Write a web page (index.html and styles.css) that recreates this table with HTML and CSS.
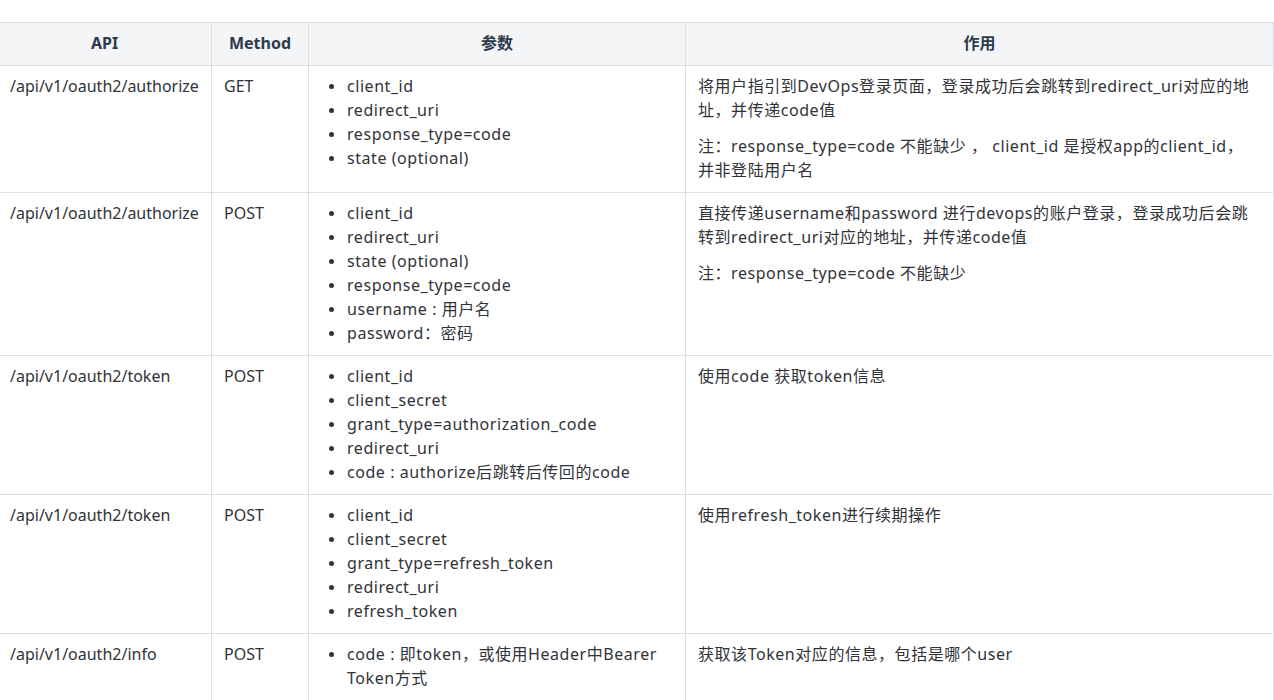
FILE: index.html
```html
<!DOCTYPE html>
<html lang="zh">
<head>
<meta charset="utf-8">
<link rel="stylesheet" href="styles.css">
</head>
<body>
<div class="wrap">
<table class="api">
  <colgroup>
    <col class="c-api"><col class="c-method"><col class="c-params"><col class="c-desc">
  </colgroup>
  <thead>
    <tr><th>API</th><th>Method</th><th>参数</th><th>作用</th></tr>
  </thead>
  <tbody>
    <tr>
      <td>/api/v1/oauth2/authorize</td>
      <td>GET</td>
      <td class="wide"><ul><li>client_id</li><li>redirect_uri</li><li>response_type=code</li><li>state (optional)</li></ul></td>
      <td class="wide"><p>将用户指引到DevOps登录页面，登录成功后会跳转到redirect_uri对应的地址，并传递code值</p><p>注：response_type=code 不能缺少 ，  client_id 是授权app的client_id，<br>并非登陆用户名</p></td>
    </tr>
    <tr>
      <td>/api/v1/oauth2/authorize</td>
      <td>POST</td>
      <td class="wide"><ul><li>client_id</li><li>redirect_uri</li><li>state (optional)</li><li>response_type=code</li><li>username : 用户名</li><li>password：密码</li></ul></td>
      <td class="wide"><p>直接传递username和password 进行devops的账户登录，登录成功后会跳转到redirect_uri对应的地址，并传递code值</p><p>注：response_type=code 不能缺少</p></td>
    </tr>
    <tr>
      <td>/api/v1/oauth2/token</td>
      <td>POST</td>
      <td class="wide"><ul><li>client_id</li><li>client_secret</li><li>grant_type=authorization_code</li><li>redirect_uri</li><li>code : authorize后跳转后传回的code</li></ul></td>
      <td class="wide"><p>使用code 获取token信息</p></td>
    </tr>
    <tr>
      <td>/api/v1/oauth2/token</td>
      <td>POST</td>
      <td class="wide"><ul><li>client_id</li><li>client_secret</li><li>grant_type=refresh_token</li><li>redirect_uri</li><li>refresh_token</li></ul></td>
      <td class="wide"><p>使用refresh_token进行续期操作</p></td>
    </tr>
    <tr>
      <td>/api/v1/oauth2/info</td>
      <td>POST</td>
      <td class="wide"><ul><li>code : 即token，或使用Header中Bearer Token方式</li></ul></td>
      <td class="wide"><p>获取该Token对应的信息，包括是哪个user</p></td>
    </tr>
  </tbody>
</table>
</div>
</body>
</html>
```

FILE: styles.css
```css
html, body {
  margin: 0;
  padding: 0;
  background: #ffffff;
}
body {
  font-family: "Noto Sans", "Noto Sans CJK SC", sans-serif;
  font-size: 16px;
  line-height: 24px;
  color: #303338;
  overflow: hidden;
}
.wrap {
  padding-top: 22px;
  margin-left: -3px;
}
.api {
  border-collapse: collapse;
  table-layout: fixed;
  width: 1276px;
}
.c-api { width: 214px; }
.c-method { width: 97px; }
.c-params { width: 377px; }
.c-desc { width: 588px; }
.api th, .api td {
  border: 1px solid #dcdfe3;
  padding: 8px 12px 10px 12px;
  vertical-align: top;
  text-align: left;
}
.api th {
  background: #f4f5f7;
  color: #2c3a4b;
  font-weight: bold;
  text-align: center;
}
.api td.wide {
  letter-spacing: 0.55px;
}
.api ul {
  margin: 0;
  padding-left: 8px;
  list-style: none;
}
.api li {
  display: flex;
  align-items: flex-start;
}
.api li::before {
  content: "";
  flex: none;
  width: 5px;
  height: 5px;
  border-radius: 50%;
  background: #303338;
  margin: 10px 13px 0 0;
}
.api p {
  margin: 0;
}
.api p + p {
  margin-top: 12px;
}
```
